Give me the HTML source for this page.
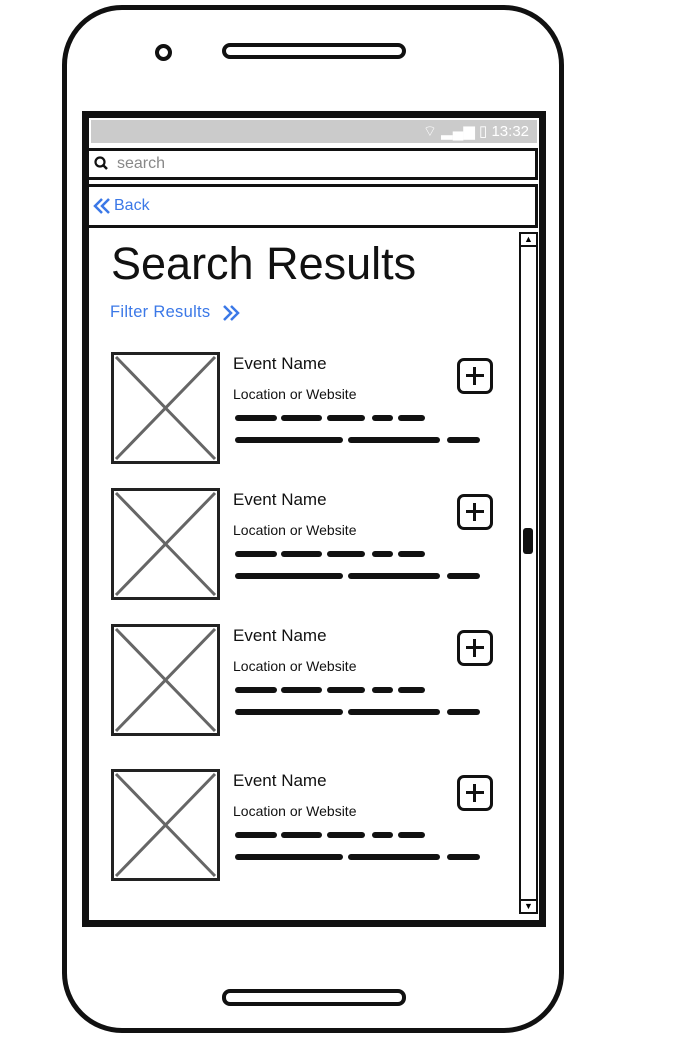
<!DOCTYPE html>
<html><head><style>
body{margin:0;width:680px;height:1047px;background:#fff;position:relative;overflow:hidden;font-family:"Liberation Sans",sans-serif}
.a{position:absolute;box-sizing:border-box}
.img{border:3px solid #222;width:109px;height:112px;background:#fff}
.t1{font-size:17px;color:#111}
.t2{font-size:14px;color:#111}
.sc{height:6px;background:#111;border-radius:3px}
.plus{width:36px;height:36px;border:3px solid #111;border-radius:7px}
.plus:before{content:"";position:absolute;left:6px;top:13px;width:18px;height:3px;background:#111}
.plus:after{content:"";position:absolute;left:13px;top:6px;width:3px;height:18px;background:#111}
</style></head><body>
<div class="a" style="left:62px;top:5px;width:502px;height:1028px;border:5px solid #111;border-radius:60px"></div>
<div class="a" style="left:155px;top:44px;width:17px;height:17px;border:4px solid #111;border-radius:50%"></div>
<div class="a" style="left:222px;top:43px;width:184px;height:16px;border:4px solid #111;border-radius:8px"></div>
<div class="a" style="left:222px;top:989px;width:184px;height:17px;border:4px solid #111;border-radius:8px"></div>
<div class="a" style="left:82px;top:111px;width:464px;height:816px;border:7px solid #111"></div>
<div class="a" style="left:91px;top:120px;width:446px;height:23px;background:#cbcbcb;color:#fff;font-size:15px;text-align:right;padding-right:8px;line-height:23px">⌔ ▂▄▆ ▯ 13:32</div>
<div class="a" style="left:86px;top:148px;width:452px;height:32px;border:3px solid #111;background:#fff;font-size:16px;color:#888;line-height:26px;padding-left:28px">search</div>
<svg class="a" style="left:94px;top:156px" width="16" height="16"><circle cx="6" cy="6" r="4.5" stroke="#111" stroke-width="2.2" fill="none"/><path d="M9 9l4 4" stroke="#111" stroke-width="2.5"/></svg>
<div class="a" style="left:86px;top:184px;width:452px;height:44px;border:3px solid #111;background:#fff;font-size:16px;color:#3b78e7;line-height:38px;padding-left:25px">Back</div>
<svg class="a" style="left:93px;top:197px" width="20" height="20"><path d="M9 2L2 9l7 7M16 2L9 9l7 7" stroke="#3b78e7" stroke-width="2.5" fill="none"/></svg>
<div class="a" style="left:519px;top:232px;width:19px;height:682px;border:2px solid #111;background:#fff"></div>
<div class="a" style="left:519px;top:232px;width:19px;height:15px;border:2px solid #111;font-size:9px;text-align:center;line-height:11px">▲</div>
<div class="a" style="left:519px;top:899px;width:19px;height:15px;border:2px solid #111;font-size:9px;text-align:center;line-height:11px">▼</div>
<div class="a" style="left:523px;top:528px;width:10px;height:26px;background:#111;border-radius:3px"></div>
<div class="a" style="left:111px;top:238px;font-size:45px;color:#111">Search Results</div>
<div class="a" style="left:110px;top:303px;font-size:16.5px;color:#3b78e7;letter-spacing:0.3px">Filter Results</div>
<svg class="a" style="left:222px;top:304px" width="20" height="20"><path d="M2 2l7 7-7 7M9 2l7 7-7 7" stroke="#3b78e7" stroke-width="2.5" fill="none"/></svg>

<div id="cards"></div>
<script>
var ys=[352,488,624,769],h='';
ys.forEach(function(y){
h+='<div class="a img" style="left:111px;top:'+y+'px"><svg width="103" height="106" style="position:absolute;left:0;top:0"><path d="M2 2L101 104M101 2L2 104" stroke="#666" stroke-width="3"/></svg></div>';
h+='<div class="a t1" style="left:233px;top:'+(y+2)+'px">Event Name</div>';
h+='<div class="a t2" style="left:233px;top:'+(y+34)+'px">Location or Website</div>';
h+='<div class="a plus" style="left:457px;top:'+(y+6)+'px"></div>';
var r1=[[235,42],[281,41],[327,38],[372,21],[398,27]],r2=[[235,108],[348,92],[447,33]];
r1.forEach(function(s){h+='<div class="a sc" style="left:'+s[0]+'px;top:'+(y+63)+'px;width:'+s[1]+'px"></div>'});
r2.forEach(function(s){h+='<div class="a sc" style="left:'+s[0]+'px;top:'+(y+85)+'px;width:'+s[1]+'px"></div>'});
});
document.getElementById('cards').innerHTML=h;
</script>
</body></html>
